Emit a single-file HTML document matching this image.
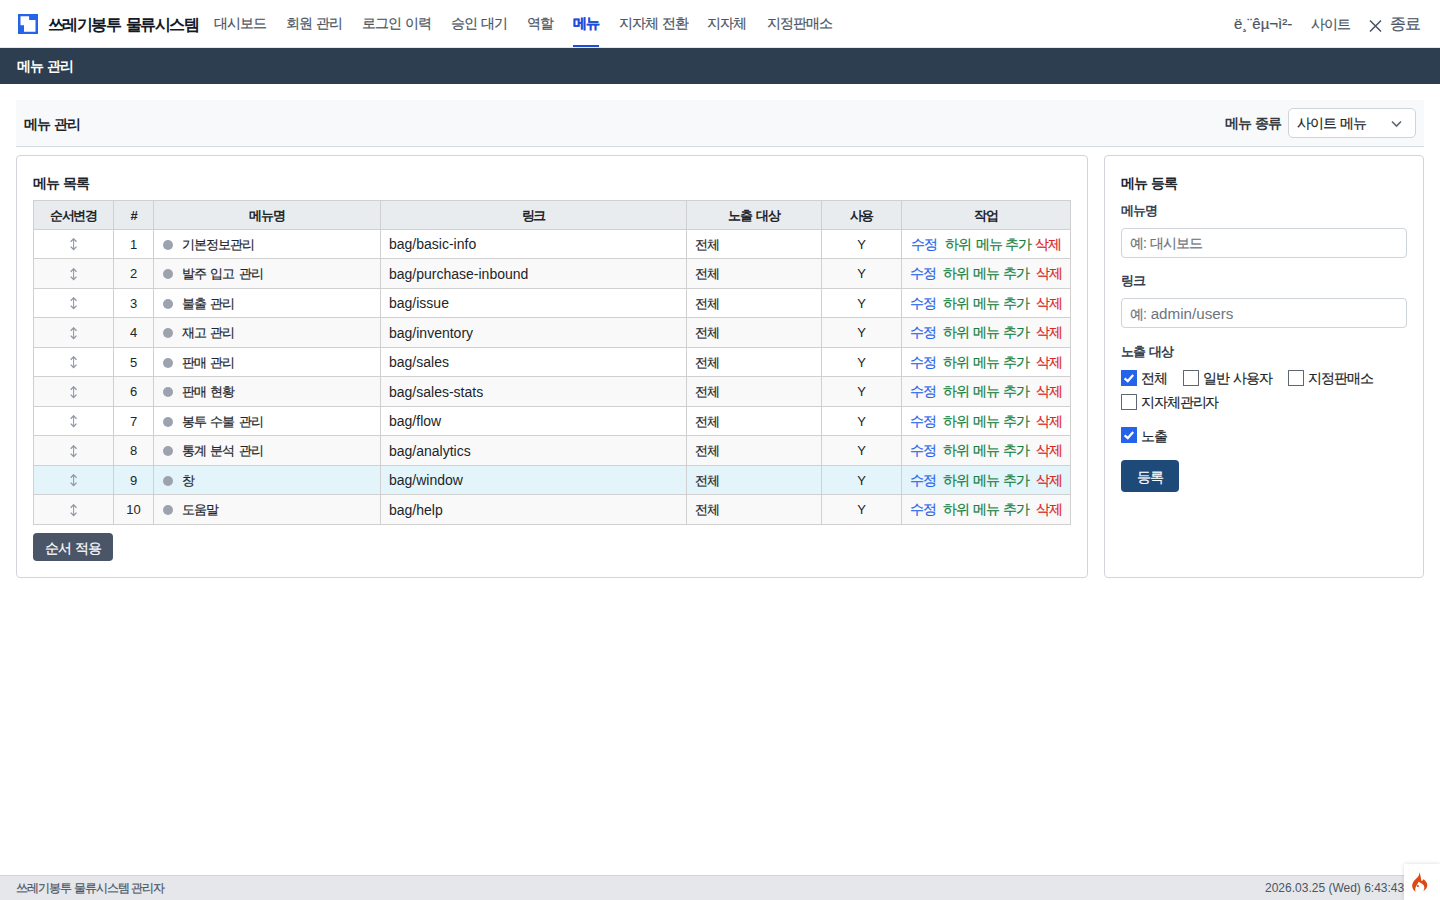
<!DOCTYPE html>
<html lang="ko">
<head>
<meta charset="utf-8">
<title>메뉴 관리</title>
<style>
*{box-sizing:border-box;margin:0;padding:0}
html,body{width:1440px;height:900px;overflow:hidden;background:#fff}
body{font-family:"Liberation Sans",sans-serif;color:#212529;font-size:14px;position:relative;line-height:1}
.a{position:absolute;white-space:nowrap;line-height:1}
.k{letter-spacing:-0.08em;word-spacing:0.14em}
.b{font-weight:bold}
.k,.nm,.nav,.act span{-webkit-text-stroke:0.2px currentColor}
.b,th,.brand{-webkit-text-stroke:0}
/* header */
.hdr{position:absolute;left:0;top:0;width:1440px;height:48px;background:#fff;border-bottom:1px solid #e5e7eb}
.logo{position:absolute;left:18px;top:14px;width:20px;height:20px}
.brand{left:48px;top:17px;font-size:16px;font-weight:bold;color:#111827;letter-spacing:-0.1em;word-spacing:0.2em}
.nav{top:16px;font-size:14px;color:#4b5563}
.nav.on{color:#1d4ed8;font-weight:bold}
.uline{position:absolute;left:573px;top:45px;width:26px;height:2px;background:#1d4ed8}
.sub{position:absolute;left:0;top:48px;width:1440px;height:36px;background:#2c3e50}
/* title section */
.ttl{position:absolute;left:16px;top:100px;width:1408px;height:47px;background:#f8f9fa;border-bottom:1px solid #d5dae1}
.card{position:absolute;top:155px;height:423px;border:1px solid #d1d5db;border-radius:4px;background:#fff}
table{position:absolute;left:33px;top:200px;border-collapse:collapse;font-size:13px;table-layout:fixed;width:1037px}
td,th{border:1px solid #d0d0d0;height:29px;padding:0 8px;white-space:nowrap;overflow:hidden;line-height:1}
th{background:#e9ecef;font-weight:bold;text-align:center;height:29px;color:#212529;letter-spacing:-0.08em;word-spacing:0.14em}
tr.g td{background:#f9f9f9;height:30px}
tr.h td{height:29px}
tr.e td{height:30px}
tr.h td{background:#e3f4fb}
td.c{text-align:center}
.dot{display:inline-block;width:10px;height:10px;border-radius:50%;background:#9ca3af;margin-right:9px;vertical-align:-1px;margin-left:1px}
.nm{letter-spacing:-0.08em;word-spacing:0.14em}
.ln{font-size:14px}
td.act{position:relative;padding:0}.act span{position:absolute;top:8px;font-size:13.5px;letter-spacing:-1px}.ed{color:#2563eb}.ad{color:#15803d}.dl{color:#dc2626}
.cb{position:absolute;width:16px;height:16px;border:1px solid #5f6672;border-radius:0.5px;background:#fff}
.cb.on{background:#2563eb;border-color:#2563eb}
.inp{position:absolute;left:1121px;width:286px;height:30px;border:1px solid #ced4da;border-radius:4px;background:#fff}
.foot{position:absolute;left:0;top:875px;width:1440px;height:25px;background:#e5e7eb;border-top:1px solid #d1d5db}
</style>
</head>
<body>
<div class="hdr">
  <svg class="logo" viewBox="0 0 20 20"><rect width="20" height="20" fill="#2563eb"/><path d="M2.5 2.3H11.1V6.1H17.5V17.7H6V11.2H2.5Z" fill="#fff"/></svg>
  <span class="a brand k">쓰레기봉투 물류시스템</span>
  <span class="a nav k" style="left:214px">대시보드</span>
  <span class="a nav k" style="left:286px">회원 관리</span>
  <span class="a nav k" style="left:362px">로그인 이력</span>
  <span class="a nav k" style="left:451px">승인 대기</span>
  <span class="a nav k" style="left:527px">역할</span>
  <span class="a nav on k" style="left:573px">메뉴</span>
  <span class="a nav k" style="left:619px">지자체 전환</span>
  <span class="a nav k" style="left:707px">지자체</span>
  <span class="a nav k" style="left:767px">지정판매소</span>
  <div class="uline"></div>
  <span class="a nav" style="left:1234px;font-size:15px;top:16px">&#xeb;&#xb8;&#xa8;&#xea;&#xb5;&#xac;&#xec;&#xb2;-</span>
  <span class="a nav k" style="left:1311px;top:17px">사이트</span>
  <svg class="a" style="left:1369px;top:20px" width="13" height="12" viewBox="0 0 13 12"><path d="M1 0.5L12 11.5M12 0.5L1 11.5" stroke="#4b5563" stroke-width="1.5"/></svg>
  <span class="a nav k" style="left:1390px;font-size:16px;top:16px">종료</span>
</div>
<div class="sub"><span class="a b k" style="left:17px;top:11px;color:#fff">메뉴 관리</span></div>

<div class="ttl">
  <span class="a b k" style="left:8px;top:17px">메뉴 관리</span>
  <span class="a b k" style="left:1209px;top:16px;color:#343a40">메뉴 종류</span>
  <div style="position:absolute;left:1272px;top:8px;width:128px;height:30px;background:#fff;border:1px solid #ced4da;border-radius:5px">
    <span class="a k" style="left:8px;top:7px">사이트 메뉴</span>
    <svg class="a" style="left:102px;top:11px" width="11" height="8" viewBox="0 0 11 8"><path d="M1 1.5L5.5 6L10 1.5" fill="none" stroke="#5f6670" stroke-width="1.6"/></svg>
  </div>
</div>

<div class="card" style="left:16px;width:1072px"></div>
<span class="a b k" style="left:33px;top:176px">메뉴 목록</span>
<table>
<colgroup><col style="width:80px"><col style="width:40px"><col style="width:227px"><col style="width:306px"><col style="width:135px"><col style="width:80px"><col style="width:169px"></colgroup>
<tr><th>순서변경</th><th>#</th><th>메뉴명</th><th>링크</th><th>노출 대상</th><th>사용</th><th>작업</th></tr>
<tr class=""><td class="c"><svg width="8" height="13" viewBox="0 0 8 13" style="display:inline-block;vertical-align:middle"><path d="M3.6 1.2V11" stroke="#8e97a8" stroke-width="1"/><path d="M0.7 3.7L3.6 0.8L6.5 3.7M0.7 8.6L3.6 11.5L6.5 8.6" fill="none" stroke="#8e97a8" stroke-width="1.3"/></svg></td><td class="c">1</td><td><span class="dot"></span><span class="nm">기본정보관리</span></td><td class="ln">bag/basic-info</td><td class="nm">전체</td><td class="c">Y</td><td class="act"><span class="ed" style="left:8.6px">수정</span><span class="ad" style="left:43px">하위</span><span class="ad" style="left:73.8px">메뉴</span><span class="ad" style="left:102.6px">추가</span><span class="dl" style="left:133px">삭제</span></td></tr>
<tr class="g"><td class="c"><svg width="8" height="13" viewBox="0 0 8 13" style="display:inline-block;vertical-align:middle"><path d="M3.6 1.2V11" stroke="#8e97a8" stroke-width="1"/><path d="M0.7 3.7L3.6 0.8L6.5 3.7M0.7 8.6L3.6 11.5L6.5 8.6" fill="none" stroke="#8e97a8" stroke-width="1.3"/></svg></td><td class="c">2</td><td><span class="dot"></span><span class="nm">발주 입고 관리</span></td><td class="ln">bag/purchase-inbound</td><td class="nm">전체</td><td class="c">Y</td><td class="act"><span class="ed" style="left:8px">수정</span><span class="ad" style="left:40.6px">하위</span><span class="ad" style="left:71.3px">메뉴</span><span class="ad" style="left:100.6px">추가</span><span class="dl" style="left:134px">삭제</span></td></tr>
<tr class=""><td class="c"><svg width="8" height="13" viewBox="0 0 8 13" style="display:inline-block;vertical-align:middle"><path d="M3.6 1.2V11" stroke="#8e97a8" stroke-width="1"/><path d="M0.7 3.7L3.6 0.8L6.5 3.7M0.7 8.6L3.6 11.5L6.5 8.6" fill="none" stroke="#8e97a8" stroke-width="1.3"/></svg></td><td class="c">3</td><td><span class="dot"></span><span class="nm">불출 관리</span></td><td class="ln">bag/issue</td><td class="nm">전체</td><td class="c">Y</td><td class="act"><span class="ed" style="left:8px">수정</span><span class="ad" style="left:40.6px">하위</span><span class="ad" style="left:71.3px">메뉴</span><span class="ad" style="left:100.6px">추가</span><span class="dl" style="left:134px">삭제</span></td></tr>
<tr class="g"><td class="c"><svg width="8" height="13" viewBox="0 0 8 13" style="display:inline-block;vertical-align:middle"><path d="M3.6 1.2V11" stroke="#8e97a8" stroke-width="1"/><path d="M0.7 3.7L3.6 0.8L6.5 3.7M0.7 8.6L3.6 11.5L6.5 8.6" fill="none" stroke="#8e97a8" stroke-width="1.3"/></svg></td><td class="c">4</td><td><span class="dot"></span><span class="nm">재고 관리</span></td><td class="ln">bag/inventory</td><td class="nm">전체</td><td class="c">Y</td><td class="act"><span class="ed" style="left:8px">수정</span><span class="ad" style="left:40.6px">하위</span><span class="ad" style="left:71.3px">메뉴</span><span class="ad" style="left:100.6px">추가</span><span class="dl" style="left:134px">삭제</span></td></tr>
<tr class=""><td class="c"><svg width="8" height="13" viewBox="0 0 8 13" style="display:inline-block;vertical-align:middle"><path d="M3.6 1.2V11" stroke="#8e97a8" stroke-width="1"/><path d="M0.7 3.7L3.6 0.8L6.5 3.7M0.7 8.6L3.6 11.5L6.5 8.6" fill="none" stroke="#8e97a8" stroke-width="1.3"/></svg></td><td class="c">5</td><td><span class="dot"></span><span class="nm">판매 관리</span></td><td class="ln">bag/sales</td><td class="nm">전체</td><td class="c">Y</td><td class="act"><span class="ed" style="left:8px">수정</span><span class="ad" style="left:40.6px">하위</span><span class="ad" style="left:71.3px">메뉴</span><span class="ad" style="left:100.6px">추가</span><span class="dl" style="left:134px">삭제</span></td></tr>
<tr class="g"><td class="c"><svg width="8" height="13" viewBox="0 0 8 13" style="display:inline-block;vertical-align:middle"><path d="M3.6 1.2V11" stroke="#8e97a8" stroke-width="1"/><path d="M0.7 3.7L3.6 0.8L6.5 3.7M0.7 8.6L3.6 11.5L6.5 8.6" fill="none" stroke="#8e97a8" stroke-width="1.3"/></svg></td><td class="c">6</td><td><span class="dot"></span><span class="nm">판매 현황</span></td><td class="ln">bag/sales-stats</td><td class="nm">전체</td><td class="c">Y</td><td class="act"><span class="ed" style="left:8px">수정</span><span class="ad" style="left:40.6px">하위</span><span class="ad" style="left:71.3px">메뉴</span><span class="ad" style="left:100.6px">추가</span><span class="dl" style="left:134px">삭제</span></td></tr>
<tr class=""><td class="c"><svg width="8" height="13" viewBox="0 0 8 13" style="display:inline-block;vertical-align:middle"><path d="M3.6 1.2V11" stroke="#8e97a8" stroke-width="1"/><path d="M0.7 3.7L3.6 0.8L6.5 3.7M0.7 8.6L3.6 11.5L6.5 8.6" fill="none" stroke="#8e97a8" stroke-width="1.3"/></svg></td><td class="c">7</td><td><span class="dot"></span><span class="nm">봉투 수불 관리</span></td><td class="ln">bag/flow</td><td class="nm">전체</td><td class="c">Y</td><td class="act"><span class="ed" style="left:8px">수정</span><span class="ad" style="left:40.6px">하위</span><span class="ad" style="left:71.3px">메뉴</span><span class="ad" style="left:100.6px">추가</span><span class="dl" style="left:134px">삭제</span></td></tr>
<tr class="g"><td class="c"><svg width="8" height="13" viewBox="0 0 8 13" style="display:inline-block;vertical-align:middle"><path d="M3.6 1.2V11" stroke="#8e97a8" stroke-width="1"/><path d="M0.7 3.7L3.6 0.8L6.5 3.7M0.7 8.6L3.6 11.5L6.5 8.6" fill="none" stroke="#8e97a8" stroke-width="1.3"/></svg></td><td class="c">8</td><td><span class="dot"></span><span class="nm">통계 분석 관리</span></td><td class="ln">bag/analytics</td><td class="nm">전체</td><td class="c">Y</td><td class="act"><span class="ed" style="left:8px">수정</span><span class="ad" style="left:40.6px">하위</span><span class="ad" style="left:71.3px">메뉴</span><span class="ad" style="left:100.6px">추가</span><span class="dl" style="left:134px">삭제</span></td></tr>
<tr class="h"><td class="c"><svg width="8" height="13" viewBox="0 0 8 13" style="display:inline-block;vertical-align:middle"><path d="M3.6 1.2V11" stroke="#8e97a8" stroke-width="1"/><path d="M0.7 3.7L3.6 0.8L6.5 3.7M0.7 8.6L3.6 11.5L6.5 8.6" fill="none" stroke="#8e97a8" stroke-width="1.3"/></svg></td><td class="c">9</td><td><span class="dot"></span><span class="nm">창</span></td><td class="ln">bag/window</td><td class="nm">전체</td><td class="c">Y</td><td class="act"><span class="ed" style="left:8px">수정</span><span class="ad" style="left:40.6px">하위</span><span class="ad" style="left:71.3px">메뉴</span><span class="ad" style="left:100.6px">추가</span><span class="dl" style="left:134px">삭제</span></td></tr>
<tr class="g"><td class="c"><svg width="8" height="13" viewBox="0 0 8 13" style="display:inline-block;vertical-align:middle"><path d="M3.6 1.2V11" stroke="#8e97a8" stroke-width="1"/><path d="M0.7 3.7L3.6 0.8L6.5 3.7M0.7 8.6L3.6 11.5L6.5 8.6" fill="none" stroke="#8e97a8" stroke-width="1.3"/></svg></td><td class="c">10</td><td><span class="dot"></span><span class="nm">도움말</span></td><td class="ln">bag/help</td><td class="nm">전체</td><td class="c">Y</td><td class="act"><span class="ed" style="left:8px">수정</span><span class="ad" style="left:40.6px">하위</span><span class="ad" style="left:71.3px">메뉴</span><span class="ad" style="left:100.6px">추가</span><span class="dl" style="left:134px">삭제</span></td></tr>
</table>
<div class="a" style="left:33px;top:533px;width:80px;height:28px;background:#4a5568;border-radius:4px"></div>
<span class="a k" style="left:45px;top:541px;color:#fff">순서 적용</span>

<div class="card" style="left:1104px;width:320px"></div>
<span class="a b k" style="left:1121px;top:176px">메뉴 등록</span>
<span class="a b k" style="left:1121px;top:204px;font-size:13px;color:#374151">메뉴명</span>
<div class="inp" style="top:228px"></div>
<span class="a k" style="left:1130px;top:236px;color:#6c757d">예: 대시보드</span>
<span class="a b k" style="left:1121px;top:274px;font-size:13px;color:#374151">링크</span>
<div class="inp" style="top:298px"></div>
<span class="a" style="left:1130px;top:306px;color:#6c757d"><span class="k">예</span>: <span style="font-size:15.2px">admin/users</span></span>
<span class="a b k" style="left:1121px;top:345px;font-size:13px;color:#374151">노출 대상</span>
<div class="cb on" style="left:1121px;top:370px"><svg width="14" height="14" viewBox="0 0 14 14" style="display:block"><path d="M2.6 7.3L5.8 10.1L11.2 4.1" fill="none" stroke="#fff" stroke-width="2.2"/></svg></div>
<span class="a k" style="left:1141px;top:371px">전체</span>
<div class="cb" style="left:1183px;top:370px"></div>
<span class="a k" style="left:1203px;top:371px">일반 사용자</span>
<div class="cb" style="left:1288px;top:370px"></div>
<span class="a k" style="left:1308px;top:371px">지정판매소</span>
<div class="cb" style="left:1121px;top:394px"></div>
<span class="a k" style="left:1141px;top:395px">지자체관리자</span>
<div class="cb on" style="left:1121px;top:427px"><svg width="14" height="14" viewBox="0 0 14 14" style="display:block"><path d="M2.6 7.3L5.8 10.1L11.2 4.1" fill="none" stroke="#fff" stroke-width="2.2"/></svg></div>
<span class="a k" style="left:1141px;top:429px">노출</span>
<div class="a" style="left:1121px;top:460px;width:58px;height:32px;background:#1e4a7a;border-radius:4px"></div>
<span class="a k" style="left:1137px;top:470px;color:#fff">등록</span>

<div class="foot">
  <span class="a k" style="left:16px;top:6px;font-size:11.6px;color:#4b5563;letter-spacing:-0.08em;word-spacing:0">쓰레기봉투 물류시스템 관리자</span>
  <span class="a" style="left:1265px;top:6px;font-size:12px;color:#4b5563">2026.03.25 (Wed) 6:43:43</span>
</div>
<div class="a" style="left:1404px;top:864px;width:36px;height:36px;background:#fff;box-shadow:0 0 4px rgba(0,0,0,0.15)">
  <svg width="40" height="40" viewBox="0 0 40 40" style="position:absolute;left:-4px;top:-4px"><path fill="#dd4814" fill-rule="evenodd" d="M19.6 12.2C19.3 14 18.9 15.6 18.2 16.6C17 18 15.6 19 14.5 20.3C12.9 22.2 12 24.3 12.2 26.5C12.4 28.7 13.7 30.6 15.6 31.6C15.1 30.5 15 29.3 15.3 28.2C15.7 26.9 16.5 25.5 17.3 24.3C17.9 23.4 18.5 22.5 18.8 21.6C19.6 22.6 20.6 23 21.7 23.6C23 24.3 24.2 25.6 24.3 27.2C24.4 28.7 23.9 30.1 23.1 31.1C25.2 30.2 26.9 28.4 27.2 26.1C27.5 23.7 26.3 21.4 24.5 20C24.1 19.7 23.7 19.5 23.3 19.3C23.3 20.1 22.5 20.8 21.4 21C21.2 19.9 21 18.6 20.8 17.2C20.5 15.6 20 13.9 19.6 12.2Z"/><circle cx="17.9" cy="26" r="1.1" fill="#dd4814"/></svg>
</div>
</body>
</html>
